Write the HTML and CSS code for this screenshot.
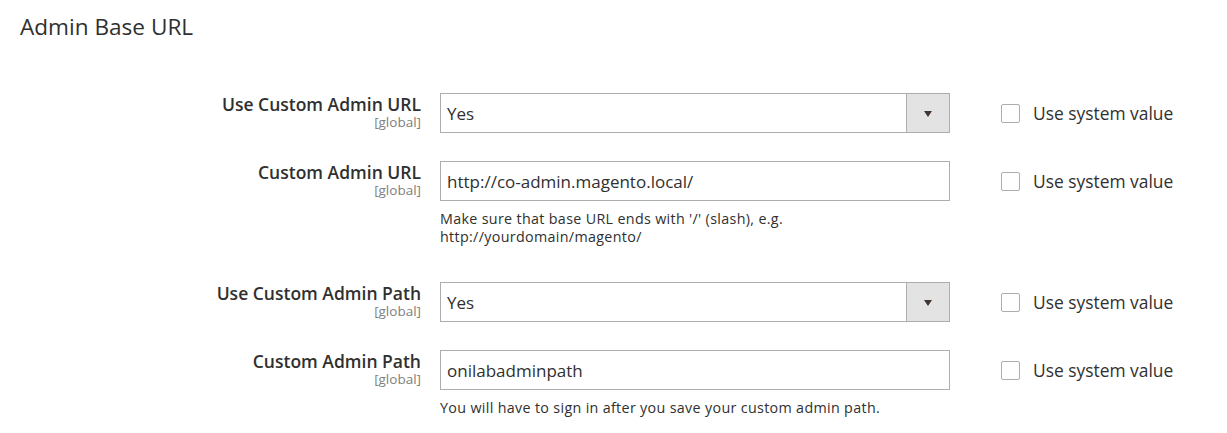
FILE: index.html
```html
<!DOCTYPE html>
<html>
<head>
<meta charset="utf-8">
<link rel="stylesheet" href="styles.css">
</head>
<body>
<section class="section">
  <h2 class="section-title">Admin Base URL</h2>
  <div class="form">
    <div class="row">
      <div class="label"><span class="label-text">Use Custom Admin URL</span><span class="scope">[global]</span></div>
      <div class="field">
        <div class="select"><span class="select-value">Yes</span><span class="select-arrow"><span class="tri"></span></span></div>
      </div>
      <label class="inherit"><span class="checkbox"></span><span class="inherit-text">Use system value</span></label>
    </div>
    <div class="row">
      <div class="label"><span class="label-text">Custom Admin URL</span><span class="scope">[global]</span></div>
      <div class="field">
        <div class="input">http://co-admin.magento.local/</div>
        <p class="note">Make sure that base URL ends with '/' (slash), e.g.<br>http://yourdomain/magento/</p>
      </div>
      <label class="inherit"><span class="checkbox"></span><span class="inherit-text">Use system value</span></label>
    </div>
    <div class="row">
      <div class="label"><span class="label-text">Use Custom Admin Path</span><span class="scope">[global]</span></div>
      <div class="field">
        <div class="select"><span class="select-value">Yes</span><span class="select-arrow"><span class="tri"></span></span></div>
      </div>
      <label class="inherit"><span class="checkbox"></span><span class="inherit-text">Use system value</span></label>
    </div>
    <div class="row">
      <div class="label"><span class="label-text">Custom Admin Path</span><span class="scope">[global]</span></div>
      <div class="field">
        <div class="input">onilabadminpath</div>
        <p class="note">You will have to sign in after you save your custom admin path.</p>
      </div>
      <label class="inherit"><span class="checkbox"></span><span class="inherit-text">Use system value</span></label>
    </div>
  </div>
</section>
</body>
</html>
```

FILE: styles.css
```css
* { box-sizing: border-box; }
html, body { margin: 0; padding: 0; background: #ffffff; }
body {
  font-family: "Open Sans", "Noto Sans", "Liberation Sans", sans-serif;
  color: #303030;
  width: 1227px;
  height: 433px;
  overflow: hidden;
}
.section { padding: 14px 0 0 20px; }
.section-title {
  margin: 0;
  font-size: 22.6px;
  line-height: 26px;
  font-weight: 400;
  color: #303030;
}
.form { padding-top: 53px; display: flex; flex-direction: column; gap: 28px; }
.row {
  display: grid;
  grid-template-columns: 401px 510px 223px;
  column-gap: 19px;
  align-items: start;
}
.label {
  display: flex;
  flex-direction: column;
  align-items: flex-end;
  text-align: right;
  padding-top: 1px;
}
.label-text {
  font-size: 17.5px;
  line-height: 20px;
  font-weight: 600;
  color: #303030;
}
.scope {
  font-size: 13.5px;
  line-height: 16px;
  color: #808080;
}
.field { display: flex; flex-direction: column; }
.select, .input {
  height: 40px;
  border: 1px solid #adadad;
  background: #fff;
  font-size: 17px;
  color: #303030;
  display: flex;
  align-items: center;
}
.input { padding-left: 6px; }
.select-value { flex: 1; padding-left: 6px; }
.select-arrow {
  width: 43px;
  align-self: stretch;
  background: #e3e3e3;
  border-left: 1px solid #adadad;
  display: flex;
  align-items: center;
  justify-content: center;
}
.tri {
  width: 0; height: 0;
  border-left: 4.5px solid transparent;
  border-right: 4.5px solid transparent;
  border-top: 6px solid #41362f;
  margin-top: 2px;
}
.note {
  margin: 9px 0 8px;
  font-size: 14.3px;
  line-height: 18px;
  letter-spacing: 0.33px;
  color: #303030;
}
.inherit {
  display: flex;
  align-items: center;
  gap: 13px;
  height: 40px;
  padding-left: 32px;
}
.checkbox {
  width: 19px; height: 19px;
  border: 1px solid #adadad;
  border-radius: 2px;
  background: #fff;
  flex: none;
}
.inherit-text { font-size: 17.4px; color: #303030; }
```
